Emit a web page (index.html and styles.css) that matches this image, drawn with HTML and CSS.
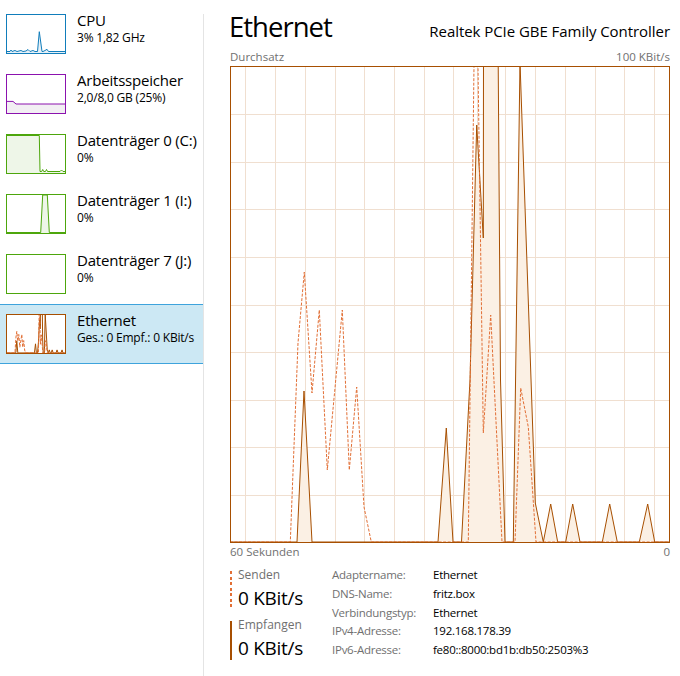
FILE: index.html
```html
<!DOCTYPE html>
<html lang="de">
<head>
  <meta charset="UTF-8">
  <title>Task-Manager – Ethernet</title>
  <link rel="stylesheet" href="styles.css">
</head>
<body>
  <div class="app">
    <div class="sidebar">
      <div class="item">
        <svg class="thumb cpu" viewBox="0 0 58 38">
          <path class="area" d="M0,36.5 L3,36.5 L4,35 L5,36.5 L8,35.5 L10,36.5 L14,35.5 L16,36.5 L19,36 L21,34.5 L23,36.5 L26,35.5 L28,36.5 L30.5,36.5 L32.3,16.7 L35,36.5 L36,36.5 L38,35.5 L40,34.3 L41.5,36.5 L58,36.5 L58,38 L0,38 Z"/>
          <path class="line" d="M0,36.5 L3,36.5 L4,35 L5,36.5 L8,35.5 L10,36.5 L14,35.5 L16,36.5 L19,36 L21,34.5 L23,36.5 L26,35.5 L28,36.5 L30.5,36.5 L32.3,16.7 L35,36.5 L36,36.5 L38,35.5 L40,34.3 L41.5,36.5 L58,36.5"/>
        </svg>
        <div class="info">
          <div class="name">CPU</div>
          <div class="sub">3% 1,82 GHz</div>
        </div>
      </div>
      <div class="item">
        <svg class="thumb mem" viewBox="0 0 58 38">
          <path class="area" d="M0,26.4 L6,26.4 L9,29 L58,29 L58,38 L0,38 Z"/>
          <path class="line" d="M0,26.4 L6,26.4 L9,29 L58,29"/>
        </svg>
        <div class="info">
          <div class="name">Arbeitsspeicher</div>
          <div class="sub">2,0/8,0 GB (25%)</div>
        </div>
      </div>
      <div class="item">
        <svg class="thumb disk" viewBox="0 0 58 38">
          <path class="area" d="M0,0 L32.3,0 L33,36.5 L58,36.5 L58,38 L0,38 Z"/>
          <path class="line" d="M0,0.5 L32.3,0.5 L33,36.5 L34.7,36.5 L35.7,34.5 L36.7,36.5 L38.5,36.5 L39.5,34.5 L40.5,36.5 L53,36.5 L54.5,35 L56,36.5 L58,36.5"/>
        </svg>
        <div class="info">
          <div class="name">Datenträger 0 (C:)</div>
          <div class="sub">0%</div>
        </div>
      </div>
      <div class="item">
        <svg class="thumb disk" viewBox="0 0 58 38">
          <path class="area" d="M33.7,38 L35.7,0 L40.3,0 L42.3,38 Z"/>
          <path class="line" d="M0,37.5 L33.7,37.5 L35.7,0 L40.3,0 L42.3,37.5 L58,37.5"/>
        </svg>
        <div class="info">
          <div class="name">Datenträger 1 (I:)</div>
          <div class="sub">0%</div>
        </div>
      </div>
      <div class="item">
        <svg class="thumb disk" viewBox="0 0 58 38"></svg>
        <div class="info">
          <div class="name">Datenträger 7 (J:)</div>
          <div class="sub">0%</div>
        </div>
      </div>
      <div class="item active">
        <svg class="thumb net" viewBox="0 0 440 477" preserveAspectRatio="none">
          <path class="area" d="M0,476 L67,476 L74,325 L82,476 L208,476 L216.3,362 L223,476 L231.5,476 L240,314 L246.7,59 L253.3,172 L253.6,-100 L267.5,-100 L270.5,314 L275,476 L283.3,476 L290,-4 L305.3,437 L313.3,476 L320.7,438 L327.7,476 L335.7,476 L342.7,438 L350,476 L372.3,476 L379.7,438 L387.3,476 L409.3,476 L417.7,438 L424.7,476 L439,476 L439,477 L0,477 Z"/>
          <path class="recv" d="M0,476 L67,476 L74,325 L82,476 L208,476 L216.3,362 L223,476 L231.5,476 L240,314 L246.7,59 L253.3,172 L253.6,-100 L267.5,-100 L270.5,314 L275,476 L283.3,476 L290,-4 L305.3,437 L313.3,476 L320.7,438 L327.7,476 L335.7,476 L342.7,438 L350,476 L372.3,476 L379.7,438 L387.3,476 L409.3,476 L417.7,438 L424.7,476 L439,476"/>
          <path class="send" d="M0,476 L60.3,476 L68,277 L74.3,206 L82,327 L89.3,244 L97.3,404 L112.3,244 L119.3,404 L126.7,321 L134,441 L141.3,476 L238.3,476 L245.8,-151 L253.3,367 L260.7,249 L272,476 L285,476 L290.7,322 L298.3,361 L306,476 L439,476"/>
        </svg>
        <div class="info">
          <div class="name">Ethernet</div>
          <div class="sub">Ges.: 0 Empf.: 0 KBit/s</div>
        </div>
      </div>
    </div>

    <div class="splitter"></div>

    <div class="main">
      <div class="head">
        <h1>Ethernet</h1>
        <div class="device">Realtek PCIe GBE Family Controller</div>
      </div>

      <div class="axis top">
        <span>Durchsatz</span>
        <span>100 KBit/s</span>
      </div>

      <svg class="chart" width="440" height="477" viewBox="0 0 440 477">
        <g class="grid">
          <path d="M0,48.5 H440 M0,96.5 H440 M0,143.5 H440 M0,191.5 H440 M0,239.5 H440 M0,286.5 H440 M0,334.5 H440 M0,381.5 H440 M0,429.5 H440"/>
          <path d="M15.5,0 V477 M45.5,0 V477 M75.5,0 V477 M105.5,0 V477 M134.5,0 V477 M164.5,0 V477 M194.5,0 V477 M223.5,0 V477 M247.5,0 V477 M275.5,0 V477 M305.5,0 V477 M335.5,0 V477 M365.5,0 V477 M394.5,0 V477 M424.5,0 V477"/>
        </g>
        <!-- Empfangen: Fläche + Linie -->
        <path class="area" d="M0,476 L67,476 L74,325 L82,476 L208,476 L216.3,362 L223,476 L231.5,476 L240,314 L246.7,59 L253.3,172 L253.6,-100 L267.5,-100 L270.5,314 L275,476 L283.3,476 L290,-4 L305.3,437 L313.3,476 L320.7,438 L327.7,476 L335.7,476 L342.7,438 L350,476 L372.3,476 L379.7,438 L387.3,476 L409.3,476 L417.7,438 L424.7,476 L439,476 L439,477 L0,477 Z"/>
        <path class="recv" d="M0,476 L67,476 L74,325 L82,476 L208,476 L216.3,362 L223,476 L231.5,476 L240,314 L246.7,59 L253.3,172 L253.6,-100 L267.5,-100 L270.5,314 L275,476 L283.3,476 L290,-4 L305.3,437 L313.3,476 L320.7,438 L327.7,476 L335.7,476 L342.7,438 L350,476 L372.3,476 L379.7,438 L387.3,476 L409.3,476 L417.7,438 L424.7,476 L439,476"/>
        <!-- Senden: gestrichelt -->
        <path class="send" d="M0,476 L60.3,476 L68,277 L74.3,206 L82,327 L89.3,244 L97.3,404 L112.3,244 L119.3,404 L126.7,321 L134,441 L141.3,476 L238.3,476 L245.8,-151 L253.3,367 L260.7,249 L272,476 L285,476 L290.7,322 L298.3,361 L306,476 L439,476"/>
        <rect class="frame" x="0.5" y="0.5" width="439" height="476"/>
      </svg>

      <div class="axis bottom">
        <span>60 Sekunden</span>
        <span>0</span>
      </div>

      <div class="details">
        <div class="rates">
          <div class="rate">
            <div class="stripe send-stripe"></div>
            <div>
              <div class="label">Senden</div>
              <div class="value">0 KBit/s</div>
            </div>
          </div>
          <div class="rate">
            <div class="stripe recv-stripe"></div>
            <div>
              <div class="label">Empfangen</div>
              <div class="value">0 KBit/s</div>
            </div>
          </div>
        </div>

        <dl class="props">
          <dt>Adaptername:</dt><dd>Ethernet</dd>
          <dt>DNS-Name:</dt><dd>fritz.box</dd>
          <dt>Verbindungstyp:</dt><dd>Ethernet</dd>
          <dt>IPv4-Adresse:</dt><dd>192.168.178.39</dd>
          <dt>IPv6-Adresse:</dt><dd>fe80::8000:bd1b:db50:2503%3</dd>
        </dl>
      </div>
    </div>
  </div>
</body>
</html>
```

FILE: styles.css
```css
body {
  margin: 0;
  font-family: "Segoe UI", "Open Sans", sans-serif;
  background: #fff;
  color: #000;
}

.app {
  display: flex;
  height: 676px;
  overflow: hidden;
}

/* linke Liste */
.sidebar {
  width: 203px;
  flex-shrink: 0;
  padding-top: 4px;
}

.item {
  display: flex;
  gap: 11px;
  height: 40px;
  padding: 9px 0 9px 6px;
  border-top: 1px solid transparent;
  border-bottom: 1px solid transparent;
}

.item.active {
  background: #cce8f4;
  border-color: #3ea3dc;
}

.thumb {
  display: block;
  flex-shrink: 0;
  width: 60px;
  height: 40px;
  box-sizing: border-box;
  border: 1px solid;
  background: #fff;
}

.thumb path {
  stroke-width: 1;
  fill: none;
}

.cpu { border-color: #117dbb; }
.cpu .line { stroke: #117dbb; }
.cpu .area { fill: #e6f0f7; stroke: none; }

.mem { border-color: #8b12ae; }
.mem .line { stroke: #8b12ae; }
.mem .area { fill: #f2eff3; stroke: none; }

.disk { border-color: #4da60c; }
.disk .line { stroke: #4da60c; }
.disk .area { fill: #eef6e8; stroke: none; }

.net { border-color: #a74f01; }
.net path { vector-effect: non-scaling-stroke; }

.info {
  margin-top: -3px;
  white-space: nowrap;
  letter-spacing: -0.2px;
}

.name {
  font-size: 15px;
  line-height: 19px;
}

.sub {
  font-size: 12px;
  line-height: 15px;
}

.splitter {
  width: 1px;
  flex-shrink: 0;
  margin-top: 14px;
  background: #e4e4e4;
}

/* rechter Bereich */
.main {
  flex: 1;
  padding: 10px 10px 0 26px;
}

.head {
  display: flex;
  justify-content: space-between;
  align-items: baseline;
  height: 34px;
}

h1 {
  margin: 0 0 0 -1px;
  font-size: 27.5px;
  font-weight: 400;
  line-height: 34px;
  letter-spacing: -1px;
}

.device {
  font-size: 15px;
  letter-spacing: -0.05px;
}

.axis {
  display: flex;
  justify-content: space-between;
  font-size: 11.5px;
  line-height: 15px;
  color: #707070;
}

.axis.top {
  margin-top: 5px;
}

.axis.bottom {
  margin-top: 1px;
}

.chart {
  display: block;
  margin-top: 2px;
}

.grid path {
  stroke: #f0dfd0;
  stroke-width: 1;
  fill: none;
}

.area {
  fill: #fbf0e4;
  stroke: none;
}

.recv {
  fill: none;
  stroke: #a74f01;
  stroke-width: 1;
}

.send {
  fill: none;
  stroke: #e26f35;
  stroke-width: 1;
  stroke-dasharray: 3 1.5;
}

.frame {
  fill: none;
  stroke: #a74f01;
  stroke-width: 1;
}

.details {
  display: flex;
  margin-top: 9px;
}

.rates {
  width: 102px;
  flex-shrink: 0;
}

.rate {
  display: flex;
  gap: 6px;
}

.rate + .rate {
  margin-top: 8px;
}

.stripe {
  width: 2px;
  flex-shrink: 0;
  margin-top: 3px;
}

.send-stripe {
  background: repeating-linear-gradient(to bottom, #e26f35 0 3px, transparent 3px 5.5px);
}

.recv-stripe {
  background: #a74f01;
}

.rate .label {
  font-size: 12px;
  line-height: 14px;
  color: #707070;
}

.rate .value {
  margin-top: 4px;
  font-size: 19px;
  line-height: 24px;
  letter-spacing: -0.3px;
}

.props {
  display: grid;
  grid-template-columns: 101px auto;
  margin: -2px 0 0;
  font-size: 11.5px;
  line-height: 18.2px;
  letter-spacing: -0.25px;
}

.props dt {
  color: #707070;
}

.props dd {
  margin: 0;
}
```
